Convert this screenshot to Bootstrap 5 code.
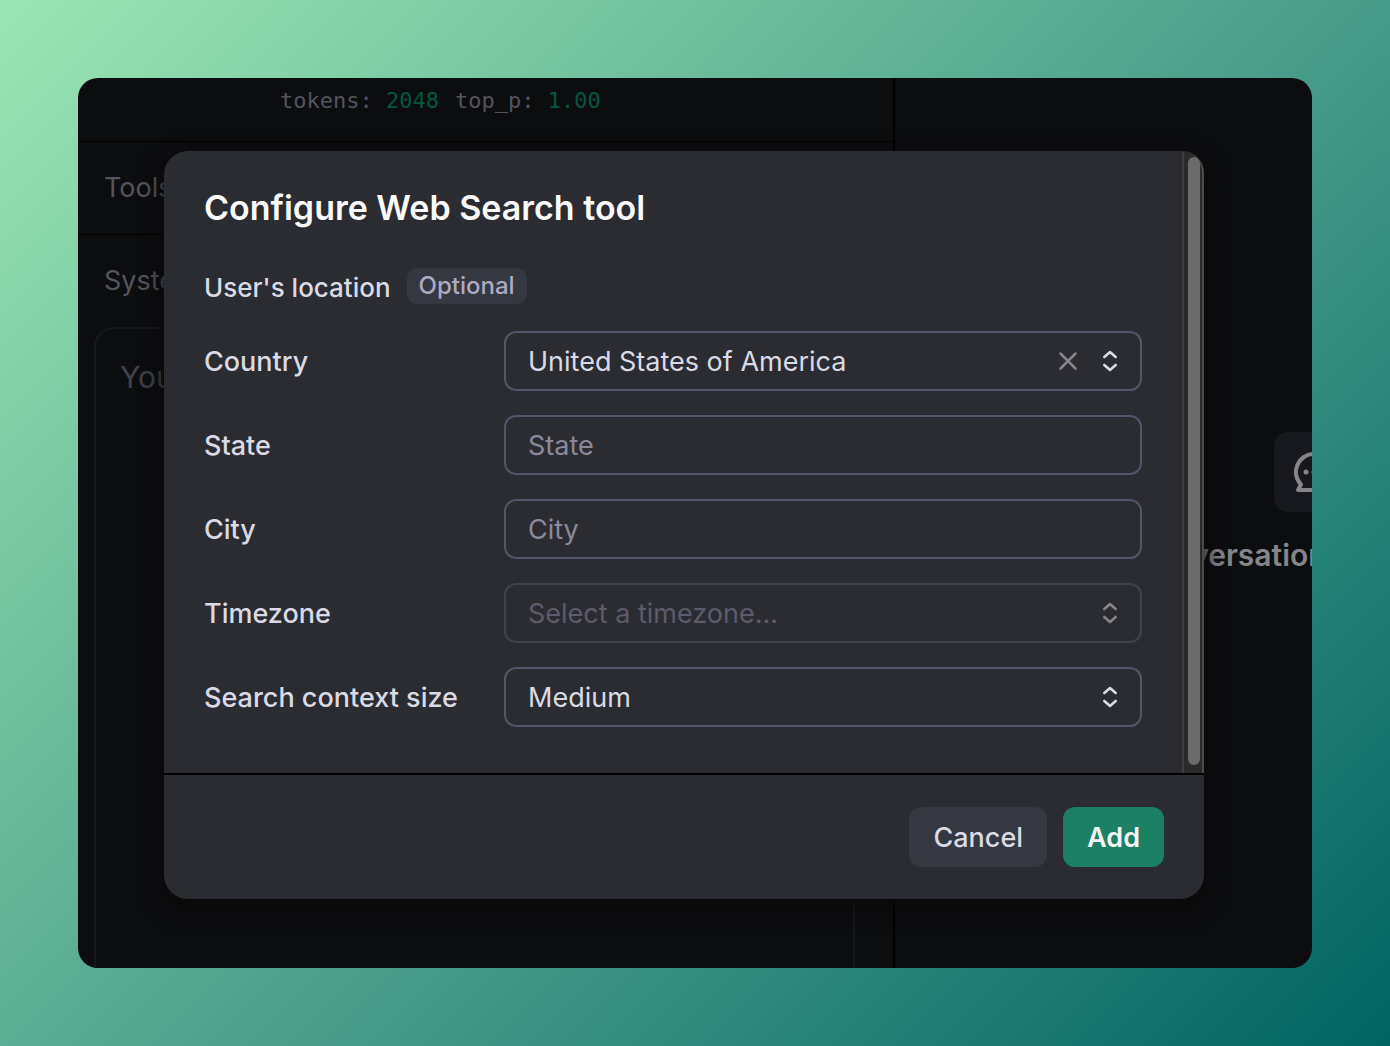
<!DOCTYPE html>
<html lang="en">
<head>
<meta charset="utf-8">
<meta name="viewport" content="width=device-width, initial-scale=1">
<title>Configure Web Search tool</title>
<link href="https://cdn.jsdelivr.net/npm/bootstrap@5.3.0/dist/css/bootstrap.min.css" rel="stylesheet">
<style>
  body {
    background: linear-gradient(135deg, #9be6b4 0%, #459a88 58%, #006462 100%);
    font-family: Inter, "Liberation Sans", sans-serif;
    font-size: 27px;
    line-height: 36px;
    padding: 78px;
  }
  .app-panel { background: #0c0d0f; border-radius: 20px; color: #55555f; }
  .editor-pane { flex: 0 0 817px; border-right: 2px solid #000; }
  .params-row { height: 64px; padding: 0 0 18px 202px; border-bottom: 1px solid #000; font: 22px/26px "DejaVu Sans Mono", monospace; color: #54545e; gap: 16px; }
  .params-row b { font-weight: 400; color: #04573e; }
  .side-row { height: 92px; padding: 0 26px; }
  .side-row.ruled { height: 93px; border-bottom: 1px solid #000; }
  .message-box { margin: 0 38px 0 16px; padding: 30px 24px; border: 2px solid #17181e; border-bottom: 0; border-radius: 20px 20px 0 0; font-size: 30px; color: #42424b; }
  .chat-pane { flex: 0 0 838px; padding-top: 354px; gap: 25px; font-size: 30px; font-weight: 600; color: #85858a; }
  .chat-tile { width: 80px; height: 80px; background: #17181e; border-radius: 14px; }
  .dialog-layer { padding: 73px 108px 69px 86px; }
  .tool-dialog { background: #2b2c31; border-radius: 24px; color: #dadae6; box-shadow: 0 8px 24px #090909; }
  .dialog-main { padding: 36px 40px 46px; }
  .dialog-title { font-size: 34px; line-height: 42px; font-weight: 600; color: #fafafa; margin-bottom: 39px; }
  .fw-label { font-weight: 500; }
  .section-name { font-size: 26px; padding-top: 2px; }
  .optional-tag { background: #353741; color: #aeaac2; border-radius: 10px; font-size: 24px; font-weight: 500; line-height: 36px; padding: 0 12px; }
  .form-stack { gap: 24px; margin-top: 25px; }
  .field-name { flex: 0 0 300px; padding-top: 2px; }
  .tool-dialog .form-control, .tool-dialog .form-select {
    height: 60px; padding: 0 22px; font-size: 27px; line-height: 36px;
    background: transparent; border: 2px solid #55546a; border-radius: 12px; color: #dadae6;
  }
  .tool-dialog .form-select { padding-top: 2px; }
  .tool-dialog .form-control::placeholder { color: #8b899d; opacity: 1; }
  .tool-dialog .form-select:disabled { border-color: #41414e; color: #5d5b6c; opacity: 1; }
  .field-icons { right: 24px; top: 0; height: 60px; gap: 24px; color: #dadae6; pointer-events: none; }
  .field-icons.dim { color: #85858b; }
  .clear-btn { pointer-events: auto; color: #85858b; line-height: 0; }
  .scroll-track { flex: 0 0 22px; background: #2a2a2a; border-left: 2px solid #3d3d3d; border-right: 2px solid #4b4b4b; padding: 6px 2px 8px 4px; border-top-right-radius: 24px; overflow: hidden; }
  .scroll-thumb { background: #6b6b6b; border-radius: 6px; }
  .dialog-foot { border-top: 2px solid #000; padding: 32px 40px; gap: 16px; }
  .dialog-foot .btn { height: 60px; padding: 2px 24px 0; border: 0; border-radius: 12px; font-size: 27px; line-height: 36px; font-weight: 600; }
  .dialog-foot .btn-cancel { background: #353741; color: #dadae6; font-weight: 500; }
  .dialog-foot .btn-add { background: #1c8065; color: #f5f5f5; }
</style>
</head>
<body class="d-flex min-vh-100">
<div class="app-panel d-flex flex-fill position-relative overflow-hidden">
  <main class="editor-pane d-flex flex-column">
    <div class="params-row d-flex align-items-center"><span>tokens: <b>2048</b></span><span>top_p: <b>1.00</b></span></div>
    <div class="side-row ruled d-flex align-items-center">Tools</div>
    <div class="side-row d-flex align-items-center">System message</div>
    <div class="message-box flex-fill">Your message</div>
  </main>
  <aside class="chat-pane d-flex flex-column align-items-center">
    <div class="chat-tile d-flex align-items-center justify-content-center">
      <svg width="44" height="44" viewBox="0 0 44 44" fill="none" stroke="#85858a" stroke-width="4" stroke-linecap="round" stroke-linejoin="round" aria-hidden="true">
        <path d="M22 4a18 18 0 1 1 0 36H6l3-5.500A18 18 0 0 1 22 4Z"/>
        <g fill="#85858a" stroke="none"><circle cx="14" cy="22" r="2.500"/><circle cx="22" cy="22" r="2.500"/><circle cx="30" cy="22" r="2.500"/></g>
      </svg>
    </div>
    <div class="text-nowrap">Your conversation will appear here</div>
  </aside>

  <div class="dialog-layer position-absolute top-0 start-0 w-100 h-100">
    <form class="tool-dialog d-flex flex-column h-100" role="dialog" aria-labelledby="dialog-title">
      <div class="d-flex flex-fill">
        <div class="dialog-main flex-fill">
          <h1 class="dialog-title" id="dialog-title">Configure Web Search tool</h1>
          <div class="d-flex align-items-start gap-3"><span class="fw-label section-name">User's location</span><span class="optional-tag">Optional</span></div>
          <div class="form-stack d-flex flex-column">
            <div class="d-flex align-items-center">
              <label class="field-name fw-label" for="country">Country</label>
              <div class="position-relative flex-fill">
                <select class="form-select" id="country"><option>United States of America</option></select>
                <div class="field-icons position-absolute d-flex align-items-center">
                  <button type="button" class="clear-btn btn p-0 border-0" aria-label="Clear country"><svg width="20" height="20" viewBox="0 0 20 20" fill="none" stroke="currentColor" stroke-width="2.500" stroke-linecap="round"><path d="M2.500 2.500l15 15M17.500 2.500l-15 15"/></svg></button>
                  <svg width="16" height="24" viewBox="0 0 16 24" fill="none" stroke="currentColor" stroke-width="2.600" stroke-linecap="round" stroke-linejoin="round" aria-hidden="true"><path d="M2.300 8L8 3l5.700 5M2.300 16L8 21l5.700-5"/></svg>
                </div>
              </div>
            </div>
            <div class="d-flex align-items-center">
              <label class="field-name fw-label" for="state">State</label>
              <input class="form-control flex-fill w-auto" id="state" type="text" placeholder="State">
            </div>
            <div class="d-flex align-items-center">
              <label class="field-name fw-label" for="city">City</label>
              <input class="form-control flex-fill w-auto" id="city" type="text" placeholder="City">
            </div>
            <div class="d-flex align-items-center">
              <label class="field-name fw-label" for="timezone">Timezone</label>
              <div class="position-relative flex-fill">
                <select class="form-select" id="timezone" disabled><option>Select a timezone...</option></select>
                <div class="field-icons dim position-absolute d-flex align-items-center">
                  <svg width="16" height="24" viewBox="0 0 16 24" fill="none" stroke="currentColor" stroke-width="2.600" stroke-linecap="round" stroke-linejoin="round" aria-hidden="true"><path d="M2.300 8L8 3l5.700 5M2.300 16L8 21l5.700-5"/></svg>
                </div>
              </div>
            </div>
            <div class="d-flex align-items-center">
              <label class="field-name fw-label" for="context-size">Search context size</label>
              <div class="position-relative flex-fill">
                <select class="form-select" id="context-size"><option>Medium</option><option>Low</option><option>High</option></select>
                <div class="field-icons position-absolute d-flex align-items-center">
                  <svg width="16" height="24" viewBox="0 0 16 24" fill="none" stroke="currentColor" stroke-width="2.600" stroke-linecap="round" stroke-linejoin="round" aria-hidden="true"><path d="M2.300 8L8 3l5.700 5M2.300 16L8 21l5.700-5"/></svg>
                </div>
              </div>
            </div>
          </div>
        </div>
        <div class="scroll-track d-flex"><div class="scroll-thumb flex-fill"></div></div>
      </div>
      <div class="dialog-foot d-flex justify-content-end">
        <button type="button" class="btn btn-cancel">Cancel</button>
        <button type="submit" class="btn btn-add">Add</button>
      </div>
    </form>
  </div>
</div>
<script src="https://cdn.jsdelivr.net/npm/bootstrap@5.3.0/dist/js/bootstrap.bundle.min.js"></script>
</body>
</html>
